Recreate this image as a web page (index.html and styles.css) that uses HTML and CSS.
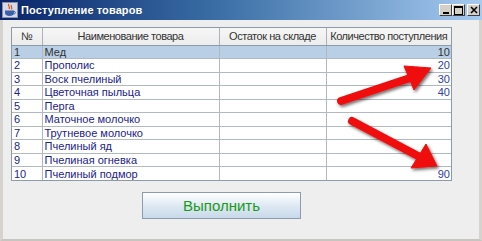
FILE: index.html
```html
<!DOCTYPE html>
<html lang="ru">
  <head>
    <meta charset="UTF-8" />
    <title>Поступление товаров</title>
    <link rel="stylesheet" href="styles.css">
  </head>

  <body>
    <div class="window">
      <div class="titlebar">
        <svg class="app-icon" width="16" height="16" viewBox="0 0 16 16">
          <rect x="0.5" y="0.5" width="15" height="15" fill="#d8d8e8" stroke="#8890a8" />
          <path d="M7 2 C5 4 9 5 7 7 M9.5 3 C8 5 11 5.5 9.5 7.5" stroke="#e05010" stroke-width="1.2" fill="none" />
          <path d="M3 8.5 H12 V11 C12 13 10 14 7.5 14 C5 14 3 13 3 11 Z" fill="#3860a8" />
          <path d="M12 9.5 C14 9.5 14 12 11.5 12" stroke="#3860a8" stroke-width="1" fill="none" />
        </svg>
        <span class="title">Поступление товаров</span>
        <div class="controls">
          <span class="ctl"><svg width="8" height="8" viewBox="0 0 8 8"><rect x="1" y="6" width="6" height="2" fill="#000" /></svg></span>
          <span class="ctl"><svg width="9" height="9" viewBox="0 0 9 9"><rect x="0.5" y="0.5" width="8" height="8" fill="none" stroke="#000" /><rect x="0" y="0" width="9" height="2" fill="#000" /></svg></span>
          <span class="ctl close"><svg width="8" height="8" viewBox="0 0 8 8"><path d="M1 1 L7 7 M7 1 L1 7" stroke="#000" stroke-width="1.6" /></svg></span>
        </div>
      </div>

      <div class="body">
        <div class="scroll">
          <table class="grid">
            <thead>
              <tr>
                <th class="c-num">№</th>
                <th class="c-name">Наименование товара</th>
                <th class="c-stock">Остаток на складе</th>
                <th class="c-qty">Количество поступления</th>
              </tr>
            </thead>
            <tbody>
              <tr class="selected"><td>1</td><td>Мед</td><td></td><td class="num">10</td></tr>
              <tr><td>2</td><td>Прополис</td><td></td><td class="num">20</td></tr>
              <tr><td>3</td><td>Воск пчелиный</td><td></td><td class="num">30</td></tr>
              <tr><td>4</td><td>Цветочная пыльца</td><td></td><td class="num">40</td></tr>
              <tr><td>5</td><td>Перга</td><td></td><td class="num"></td></tr>
              <tr><td>6</td><td>Маточное молочко</td><td></td><td class="num"></td></tr>
              <tr><td>7</td><td>Трутневое молочко</td><td></td><td class="num"></td></tr>
              <tr><td>8</td><td>Пчелиный яд</td><td></td><td class="num"></td></tr>
              <tr><td>9</td><td>Пчелиная огневка</td><td></td><td class="num"></td></tr>
              <tr><td>10</td><td>Пчелиный подмор</td><td></td><td class="num">90</td></tr>
            </tbody>
          </table>
        </div>

        <div class="actions">
          <button class="run">Выполнить</button>
        </div>
      </div>

      <!-- red pointer arrows drawn over the table -->
      <svg class="arrows" width="482" height="241" viewBox="0 0 482 241">
        <defs>
          <filter id="shadow" x="-20%" y="-20%" width="140%" height="140%">
            <feDropShadow dx="1.5" dy="2" stdDeviation="1.5" flood-color="#000" flood-opacity="0.55" />
          </filter>
        </defs>
        <g filter="url(#shadow)" fill="#f00c0c" stroke="#f00c0c">
          <line x1="341" y1="101" x2="413" y2="77" stroke-width="8" stroke-linecap="round" />
          <polygon points="431,68 404,66 414,90" stroke-width="1" stroke-linejoin="round" />
          <line x1="352" y1="121" x2="420" y2="157" stroke-width="8" stroke-linecap="round" />
          <polygon points="437,166 426,144 411,168" stroke-width="1" stroke-linejoin="round" />
        </g>
      </svg>
    </div>
  </body>
</html>
```

FILE: styles.css
```css
*,
*::before,
*::after {
  box-sizing: border-box;
}

body {
  margin: 0;
  background: #ffffff;
  font-family: "Liberation Sans", Arial, sans-serif;
}

.window {
  position: relative;
  width: 482px;
  height: 241px;
  background: #eeeeee;
  border-left: 3px solid #d6d3ce;
  border-right: 3px solid #d6d3ce;
  border-bottom: 2px solid #c8c5c0;
  display: flex;
  flex-direction: column;
}

.titlebar {
  height: 20px;
  margin: 0 -3px;
  padding: 0 2px 0 2px;
  display: flex;
  align-items: center;
  gap: 3px;
  background: linear-gradient(to right, #0a246a 0%, #3a6ea5 45%, #a6caf0 100%);
}

.app-icon {
  flex: none;
}

.title {
  color: #ffffff;
  font-weight: bold;
  font-size: 11px;
  letter-spacing: 0.1px;
}

.controls {
  margin-left: auto;
  display: flex;
  gap: 0;
}

.ctl {
  width: 13px;
  height: 12px;
  background: #d4d0c8;
  border: 1px solid;
  border-color: #ffffff #404040 #404040 #ffffff;
  display: flex;
  align-items: center;
  justify-content: center;
}

.ctl.close {
  margin-left: 2px;
}

.body {
  padding: 7px 0 0 8px;
  flex: 1;
}

.scroll {
  width: 441px;
  border: 1px solid #8d9aaa;
  background: #ffffff;
}

.grid {
  border-collapse: collapse;
  width: 439px;
  table-layout: fixed;
  font-size: 11px;
}

.grid th {
  height: 17px;
  padding: 0;
  font-weight: normal;
  letter-spacing: -0.45px;
  color: #333333;
  background: linear-gradient(#f6f6f6, #ececec);
  border-right: 1px solid #a9b2bd;
  border-bottom: 1px solid #8d9aaa;
  white-space: nowrap;
}

.c-num {
  width: 30px;
}

.c-name {
  width: 177px;
}

.c-stock {
  width: 107px;
}

.grid td {
  height: 13.5px;
  padding: 0 1px 0 2px;
  line-height: 12px;
  color: #22228c;
  border-right: 1px solid #b0b8c2;
  border-bottom: 1px solid #b0b8c2;
  white-space: nowrap;
}

.grid td.num {
  text-align: right;
  color: #3040a8;
}

.grid th:last-child,
.grid td:last-child {
  border-right: none;
}

.grid tr.selected td {
  background: #b8cfe5;
  color: #333333;
}

.grid tr:last-child td {
  border-bottom: none;
}

.actions {
  padding: 11px 0 0 131px;
}

.run {
  width: 159px;
  height: 27px;
  border: 1px solid #8a9bb2;
  background: linear-gradient(#ffffff, #dce7f2 55%, #c9d9ea);
  color: #1a9a1a;
  font-family: "Liberation Sans", Arial, sans-serif;
  font-size: 15px;
  padding: 0;
}

.arrows {
  position: absolute;
  left: -3px;
  top: 0;
  pointer-events: none;
}
```
